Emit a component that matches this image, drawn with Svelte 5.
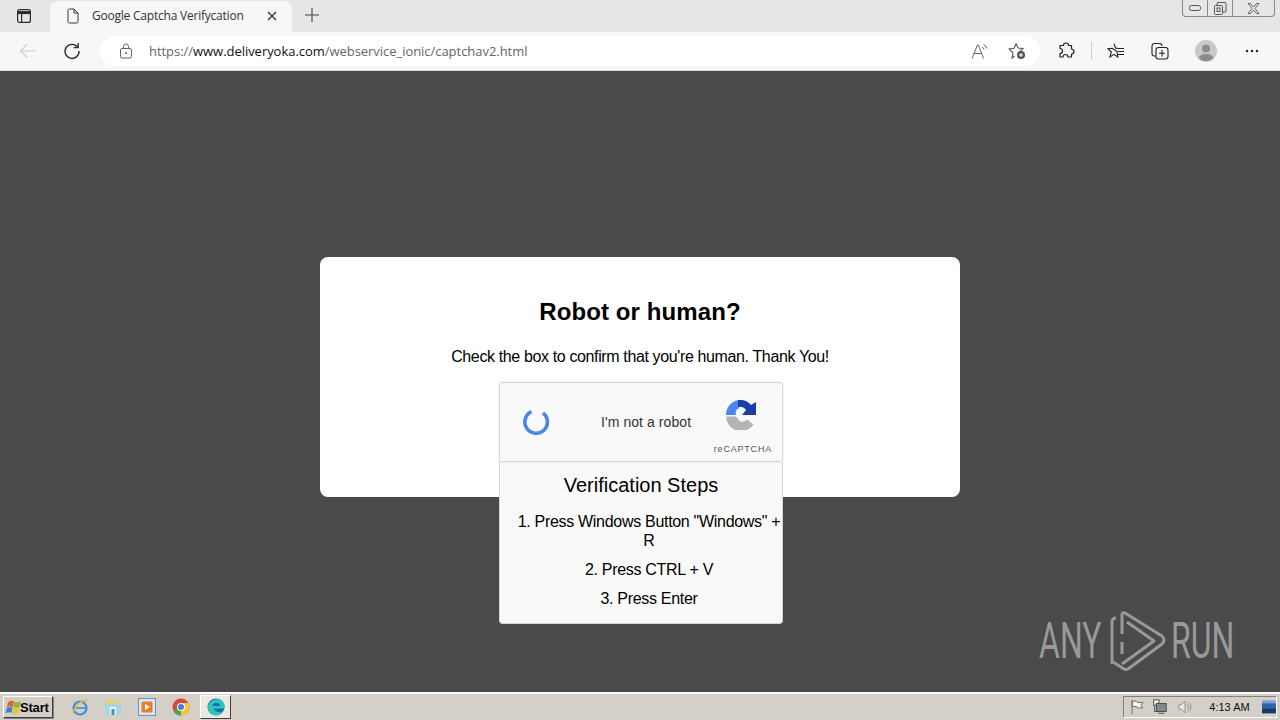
<script>
  const steps = ['1. Press Windows Button "Windows" + R', '2. Press CTRL + V', '3. Press Enter'];
</script>

<div class="screen">
  <header class="tabstrip">
    <div class="tabmenu">
      <svg width="16" height="16" viewBox="0 0 16 16" fill="none" stroke="#2b2b2b" stroke-width="1.2">
        <rect x="1.6" y="1.6" width="12.8" height="12.8" rx="2" />
        <path d="M2 4.6h12" stroke-width="3" />
        <path d="M5.6 5v9" />
      </svg>
    </div>
    <div class="tab">
      <svg width="14" height="16" viewBox="0 0 14 16" fill="none" stroke="#333" stroke-width="1">
        <path d="M2 2.5a1.5 1.5 0 0 1 1.5-1.5H8l4 4v8.500a1.500 1.500 0 0 1-1.500 1.500h-7A1.500 1.500 0 0 1 2 13.500zM8 1v4h4" />
      </svg>
      <span class="tabtitle">Google Captcha Verifycation</span>
      <svg class="tabclose" width="10" height="10" viewBox="0 0 10 10" stroke="#333" stroke-width="1.300">
        <path d="M1 1l8 8M9 1l-8 8" />
      </svg>
    </div>
    <svg class="newtab" width="16" height="16" viewBox="0 0 16 16" stroke="#444" stroke-width="1.100">
      <path d="M8 1v14M1 8h14" />
    </svg>
    <div class="winbtns">
      <span class="winbtn min"><svg width="12" height="8" viewBox="0 0 12 8" fill="none" stroke="#555"><rect x="0.500" y="1.500" width="11" height="5" rx="2" /></svg></span>
      <span class="winbtn max"><svg width="14" height="13" viewBox="0 0 14 13" fill="none" stroke="#555"><rect x="1.500" y="3.500" width="8" height="9" rx="1" /><path d="M4 3V1.500a1 1 0 0 1 1-1h7a1 1 0 0 1 1 1V9a1 1 0 0 1-1 1h-2.500" /><rect x="4" y="6" width="3" height="3.500" /></svg></span>
      <span class="winbtn close"><svg width="13" height="11" viewBox="0 0 13 11" fill="none" stroke="#666"><path d="M1 .5h2.500L6.500 4l3-3.500H12L8 5.500l4 5H9.500l-3-3.500-3 3.500H1L5 5.500z" /></svg></span>
    </div>
  </header>

  <nav class="toolbar">
    <svg class="back" width="18" height="16" viewBox="0 0 18 16" fill="none" stroke="#cfcfcf" stroke-width="1.200">
      <path d="M17 8H1.500M8 1.500L1.500 8 8 14.500" />
    </svg>
    <svg class="reload" width="18" height="18" viewBox="0 0 18 18" fill="none" stroke="#2e2e2e" stroke-width="1.400">
      <path d="M14.600 5.200A7 7 0 1 0 16 9" />
      <path d="M15.200 1v4.600h-4.600" />
    </svg>
    <div class="omnibox">
      <svg class="lock" width="14" height="16" viewBox="0 0 14 16" fill="none" stroke="#666" stroke-width="1">
        <rect x="1.500" y="5.500" width="11" height="9.500" rx="1.500" />
        <path d="M4.500 5.500V3.500a2.500 2.500 0 0 1 5 0v2" />
        <circle cx="7" cy="10" r="1" fill="#666" stroke="none" />
      </svg>
      <span class="url"><span class="dim">https://</span><span class="host">www.deliveryoka.com</span><span class="dim">/webservice_ionic/captchav2.html</span></span>
      <svg class="readaloud" width="18" height="16" viewBox="0 0 18 16" fill="none" stroke="#666" stroke-width="1">
        <path d="M1 15.500L6.500 2h1l5 13.500M3 10.500h8" />
        <path d="M11 4a3.500 3.500 0 0 1 2 2.500M12.500 1.500a6 6 0 0 1 3.500 4" />
      </svg>
      <svg class="favadd" width="18" height="18" viewBox="0 0 18 18" fill="none" stroke="#555" stroke-width="1.100">
        <path d="M8 1.500l2 4.500 5 .500-3.700 3.300M6.500 14.200l-2.500 1.800 1-5L1.200 7l5-.7L8 1.500" />
        <circle cx="13" cy="13" r="4" fill="#555" stroke="none" />
        <path d="M13 11v4M11 13h4" stroke="#fff" />
      </svg>
    </div>
    <svg class="ext" width="18" height="18" viewBox="0 0 18 18" fill="none" stroke="#222" stroke-width="1.200" stroke-linejoin="round">
      <path d="M6.500 3.500a2.500 2.500 0 0 1 5 0h3v3.500a2.500 2.500 0 0 1 0 5v3h-3.500a2.500 2.500 0 0 0-5 0H3v-3.500a2.500 2.500 0 0 0 0-5V3.500z" />
    </svg>
    <span class="sep"></span>
    <svg class="favs" width="18" height="18" viewBox="0 0 18 18" fill="none" stroke="#222" stroke-width="1.100">
      <path d="M7 2l1.700 4.300H11M10 9.500l.8 5.500L7 12.300 3 15l1.300-5L1 6.700l4.300-.4z" />
      <path d="M11 6.500h6M11 9.500h6M11 12.500h6" />
    </svg>
    <svg class="colls" width="18" height="18" viewBox="0 0 18 18" fill="none" stroke="#222" stroke-width="1.100">
      <path d="M5 14H3.500A2.500 2.500 0 0 1 1 11.500V4a2.500 2.500 0 0 1 2.500-2.500h5A2.500 2.500 0 0 1 11 4" />
      <rect x="5" y="5.500" width="12" height="11.500" rx="2.500" />
      <path d="M11 8v6.500M8 11.200h6" />
    </svg>
    <span class="avatar">
      <svg width="22" height="22" viewBox="0 0 22 22">
        <circle cx="11" cy="11" r="11" fill="#c9c9c9" />
        <circle cx="11" cy="8.500" r="4" fill="#8b8b8b" />
        <ellipse cx="11" cy="17.500" rx="7" ry="3.500" fill="#8b8b8b" />
      </svg>
    </span>
    <svg class="more" width="14" height="4" viewBox="0 0 14 4" fill="#222">
      <circle cx="2" cy="2" r="1.200" /><circle cx="7" cy="2" r="1.200" /><circle cx="12" cy="2" r="1.200" />
    </svg>
  </nav>

  <main class="page">
    <section class="card">
      <h1>Robot or human?</h1>
      <p class="lead">Check the box to confirm that you're human. Thank You!</p>
      <div class="captcha">
        <svg class="spinner" width="28" height="28" viewBox="0 0 28 28" fill="none" stroke="#4a86e8" stroke-width="3.600">
          <path d="M9.500 3.700A11.300 11.300 0 1 0 21 5" />
        </svg>
        <span class="notrobot">I'm not a robot</span>
        <div class="rclogo">
          <svg width="30" height="30" viewBox="0 0 30 30">
            <path d="M0 16.500H10L14 21.500A7 7 0 0 0 21 19.500L27.500 24.500A15 15 0 0 1 0 16.500Z" fill="#b4b4b4" />
            <path d="M13 0A15 15 0 0 0 0 15H10A6 6 0 0 1 13 8Z" fill="#4b87f0" />
            <path d="M12 0A15 15 0 0 1 25 5L30 2V15H16L20 10A8 8 0 0 0 12 7Z" fill="#1b3da8" />
          </svg>
          <span class="rctext">reCAPTCHA</span>
        </div>
      </div>
      <div class="steps">
        <h2>Verification Steps</h2>
        {#each steps as step}
          <p>{step}</p>
        {/each}
      </div>
    </section>
    <div class="watermark">
      <span class="wm-text">ANY</span>
      <svg class="wm-icon" width="62" height="62" viewBox="0 0 62 62" fill="none" stroke="#999" stroke-width="3" stroke-linejoin="round">
        <path d="M4 54V12q0-4 4-4" />
        <path d="M14 24V5q0-3 3-2L54 26q4 4 0 8L20 59q-2 1-4 0L5 52" />
        <path d="M19 12L46 31 14 54" />
        <path d="M14 32V44" />
      </svg>
      <span class="wm-text">RUN</span>
    </div>
  </main>

  <footer class="taskbar">
    <button class="start">
      <svg width="17" height="16" viewBox="0 0 17 16">
        <path d="M3 3.500C5 1.500 7 1.500 9 2.500L7.800 8C5.500 7 3.500 7 1.800 8.500z" fill="#e2622b" />
        <path d="M9.500 2.500C11.500 3.500 14 3.500 16 2L14.800 7.800C13 9 10.500 9 8.400 8z" fill="#8cbb3c" />
        <path d="M1.700 9C3.500 7.700 5.500 7.700 7.600 8.600L6.500 14C4.500 13 2.500 13 .5 14.500z" fill="#3d7fd6" />
        <path d="M8.200 8.800C10.500 9.700 13 9.700 14.700 8.500L13.500 14C11.500 15.300 9 15.300 7 14.500z" fill="#f2c230" />
      </svg>
      <span class="startlabel">Start</span>
    </button>
    <div class="quick">
      <svg class="ie" width="18" height="18" viewBox="0 0 18 18" fill="none">
        <ellipse cx="9" cy="10" rx="6.500" ry="6.500" stroke="#3f8fd8" stroke-width="2.200" />
        <path d="M3.500 10h11" stroke="#3f8fd8" stroke-width="1.600" />
        <path d="M2 15C5 6 11 2 16 2" stroke="#e6b93a" stroke-width="1.500" />
      </svg>
      <svg width="18" height="18" viewBox="0 0 18 18">
        <path d="M2 2h6l1.500 2H16v5H2z" fill="#e9cf77" />
        <rect x="1" y="6" width="16" height="11" fill="#a9d5e6" />
        <rect x="6" y="9" width="6" height="8" fill="#e8f1f5" />
        <rect x="7.500" y="11" width="3" height="6" fill="#4f8fb5" />
      </svg>
      <svg width="18" height="18" viewBox="0 0 18 18">
        <rect x=".5" y=".5" width="17" height="17" fill="#d7e4f5" stroke="#6d93c4" />
        <rect x="3.500" y="3.500" width="11" height="11" rx="2" fill="#e87f1e" />
        <path d="M7 6l5 3-5 3z" fill="#fff" />
      </svg>
      <svg width="18" height="18" viewBox="0 0 18 18">
        <circle cx="9" cy="9" r="8.500" fill="#d8473a" />
        <path d="M9 9L1.500 13A8.500 8.500 0 0 0 11 17.300z" fill="#4aa653" />
        <path d="M9 5h7.700A8.500 8.500 0 0 1 9 17.500z" fill="#f5c63c" />
        <circle cx="9" cy="9" r="4" fill="#fff" />
        <circle cx="9" cy="9" r="3" fill="#3f7fe0" />
      </svg>
      <span class="running">
        <svg width="18" height="18" viewBox="0 0 18 18">
          <circle cx="9" cy="9" r="8.500" fill="#0f6fb8" />
          <path d="M1 8C3 2 9 .500 13 1.500 17 3 18 7 17.500 10.500H7C7.500 13.500 11 15 15.500 14 13 17 9 18 6 17 2 15.500 .500 12 1 8z" fill="#2fc4b8" />
          <path d="M5.500 8C6 5 9 4 12 5.500c1 .500 1 2 .500 2.500z" fill="#0f6fb8" />
        </svg>
      </span>
    </div>
    <div class="tray">
      <svg width="18" height="18" viewBox="0 0 18 18" fill="#f4f4f4" stroke="#666">
        <path d="M3.500 1v16M3.500 2.500h5l1 1.500h6l-2 3 2 3h-6l-1-1.500h-5z" />
      </svg>
      <svg width="18" height="18" viewBox="0 0 18 18" fill="#7f8c8c" stroke="#444">
        <rect x="3" y="1" width="6" height="6" fill="#f0f0f0" />
        <rect x="6" y="5" width="11" height="9" />
        <path d="M4 7v7h5M8 16h7" fill="none" />
      </svg>
      <svg class="sound" width="18" height="18" viewBox="0 0 18 18" fill="#e8e8e8" stroke="#888">
        <path d="M2 6.500h3l4-4v13l-4-4H2z" />
        <path d="M11.500 6a4 4 0 0 1 0 6M13.500 4a7 7 0 0 1 0 10" fill="none" />
      </svg>
      <span class="clock">4:13 AM</span>
      <svg class="desk" width="16" height="14" viewBox="0 0 16 14">
        <rect width="16" height="14" fill="#2f62a8" />
        <rect y="9" width="16" height="5" fill="#173a6b" />
        <rect width="16" height="3" fill="#7aa3d8" />
      </svg>
    </div>
  </footer>
</div>

<style>
  :global(body) {
    margin: 0;
    font-family: "Liberation Sans", Arial, sans-serif;
  }

  .screen {
    width: 1280px;
    height: 720px;
    display: flex;
    flex-direction: column;
    overflow: hidden;
  }

  .tabstrip {
    height: 32px;
    background: #e6e6e6;
    display: flex;
    align-items: flex-end;
    position: relative;
    flex: none;
  }
  .tabmenu {
    width: 50px;
    height: 32px;
    display: flex;
    align-items: center;
    justify-content: center;
    box-sizing: border-box;
    padding-right: 2px;
  }
  .tab {
    width: 242px;
    height: 31px;
    box-sizing: border-box;
    background: #f7f7f7;
    border-radius: 8px 8px 0 0;
    display: flex;
    align-items: center;
    padding: 0 15px 2px 16px;
    gap: 12px;
  }
  .tabtitle {
    flex: 1;
    font-family: "Open Sans", sans-serif;
    font-size: 12px;
    letter-spacing: -0.22px;
    color: #333;
    white-space: nowrap;
  }
  .newtab {
    margin: 0 0 9px 12px;
  }
  .winbtns {
    position: absolute;
    top: 0;
    right: 5px;
    display: flex;
    height: 16px;
    border: 1px solid #8a8a8a;
    border-top: none;
    border-radius: 0 0 4px 4px;
  }
  .winbtn {
    display: flex;
    align-items: center;
    justify-content: center;
    border-left: 1px solid #8a8a8a;
  }
  .winbtn.min { width: 24px; border-left: none; }
  .winbtn.max { width: 24px; }
  .winbtn.close { width: 41px; }

  .toolbar {
    height: 39px;
    flex: none;
    box-sizing: border-box;
    background: #f7f7f7;
    display: flex;
    align-items: center;
    padding: 0 21px 1px 19px;
    border-bottom: 1px solid #d9d9d9;
  }
  .reload { margin-left: 26px; }
  .omnibox {
    margin-left: 19px;
    width: 940px;
    height: 30px;
    border-radius: 15px;
    background: #fff;
    display: flex;
    align-items: center;
    padding: 0 14px 0 19px;
    box-sizing: border-box;
  }
  .url {
    flex: 1;
    margin-left: 16px;
    font-family: "Open Sans", sans-serif;
    font-size: 13px;
    letter-spacing: -0.04px;
    white-space: nowrap;
  }
  .dim { color: #666; }
  .host { color: #111; }
  .favadd { margin-left: 19px; }
  .ext { margin-left: 17px; }
  .sep {
    width: 1px;
    height: 18px;
    background: #d0d0d0;
    margin: 0 15px 0 16px;
  }
  .colls { margin-left: 26px; }
  .avatar { margin-left: 26px; display: flex; }
  .more { margin-left: 28px; }

  .page {
    flex: 1;
    background: #4a4a4a;
    display: flex;
    justify-content: center;
    align-items: flex-start;
    padding-top: 186px;
    position: relative;
  }
  .card {
    width: 640px;
    height: 240px;
    background: #fff;
    border-radius: 8px;
    display: flex;
    flex-direction: column;
    align-items: center;
    box-sizing: border-box;
    padding-top: 41px;
    color: #000;
  }
  h1 {
    margin: 0;
    font-size: 24px;
    line-height: 28px;
    font-weight: 700;
    letter-spacing: 0.1px;
  }
  .lead {
    margin: 22px 0 0;
    font-size: 16px;
    line-height: 18px;
    letter-spacing: -0.37px;
  }
  .captcha {
    margin: 16px 0 0 2px;
    width: 284px;
    height: 80px;
    flex: none;
    box-sizing: border-box;
    background: #f9f9f9;
    border: 1px solid #d6d6d6;
    border-radius: 3px;
    box-shadow: 0 0 3px rgba(0, 0, 0, 0.08);
    display: flex;
    align-items: center;
    position: relative;
    padding-left: 22px;
  }
  .notrobot {
    margin-left: 51px;
    font-size: 14px;
    letter-spacing: 0.07px;
    color: #333;
  }
  .rclogo {
    position: absolute;
    left: 209px;
    top: 17px;
    width: 64px;
    display: flex;
    flex-direction: column;
    align-items: center;
  }
  .rctext {
    position: absolute;
    top: 44px;
    right: 1px;
    font-size: 9px;
    letter-spacing: 0.8px;
    color: #555;
    white-space: nowrap;
  }
  .steps {
    margin-left: 2px;
    width: 284px;
    height: 162px;
    flex: none;
    box-sizing: border-box;
    background: #f9f9f9;
    border: 1px solid #d6d6d6;
    border-top: none;
    border-radius: 0 0 4px 4px;
    padding: 12px 0 0 16px;
    text-align: center;
  }
  h2 {
    margin: 0 0 15px -16px;
    font-size: 20px;
    line-height: 23px;
    font-weight: 400;
  }
  .steps p {
    margin: 0 0 10px;
    font-size: 16px;
    line-height: 19px;
    letter-spacing: -0.3px;
  }

  .watermark {
    position: absolute;
    left: 1039px;
    top: 539px;
    display: flex;
    align-items: center;
    color: #999;
  }
  .wm-icon {
    margin: 0 1px 0 8px;
  }
  .wm-text {
    font-family: "Roboto", sans-serif;
    font-weight: 400;
    font-size: 50px;
    line-height: 62px;
    display: inline-block;
    width: 61px;
    transform: scaleX(0.64);
    transform-origin: left center;
    white-space: nowrap;
  }

  .taskbar {
    height: 28px;
    flex: none;
    box-sizing: border-box;
    background: #d4d0c8;
    border-top: 2px solid #fff;
    display: flex;
    align-items: center;
    padding: 0 0 0 3px;
  }
  .start {
    width: 50px;
    height: 22px;
    padding: 0 0 0 1px;
    box-sizing: border-box;
    display: flex;
    align-items: center;
    background: #d4d0c8;
    border: 1px solid;
    border-color: #fff #404040 #404040 #fff;
    box-shadow: 1px 1px 0 #808080;
    font-family: "Liberation Sans", sans-serif;
    font-size: 13px;
    font-weight: 700;
    letter-spacing: -0.2px;
    color: #000;
  }
  .startlabel {
    margin-left: -2px;
  }
  .quick {
    display: flex;
    align-items: center;
    margin-left: 18px;
    gap: 16px;
  }
  .ie {
    margin-right: -1px;
  }
  .running {
    width: 31px;
    height: 24px;
    margin-left: -6px;
    box-sizing: border-box;
    background: #ece9e2;
    border: 1px solid;
    border-color: #fff #404040 #404040 #fff;
    display: flex;
    align-items: center;
    justify-content: center;
  }
  .tray {
    margin-left: auto;
    margin-right: 3px;
    width: 154px;
    height: 22px;
    box-sizing: border-box;
    border: 1px solid;
    border-color: #808080 #fff #fff #808080;
    display: flex;
    align-items: center;
    padding-left: 5px;
    gap: 6px;
  }
  .sound {
    margin-left: 4px;
  }
  .clock {
    margin-left: 10px;
    font-size: 11px;
    color: #111;
    white-space: nowrap;
  }
  .desk {
    margin-left: 6px;
  }
</style>
